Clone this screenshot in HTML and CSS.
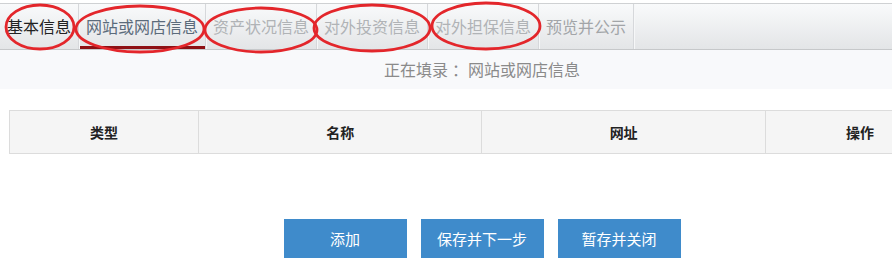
FILE: index.html
```html
<!DOCTYPE html>
<html lang="zh-CN">
<head>
  <meta charset="UTF-8" />
  <title>网站或网店信息</title>
  <link rel="stylesheet" href="styles.css">
</head>
<body>

<div class="viewport">
  <div class="page">
    <nav class="tabs">
      <a href="#" class="tab done">基本信息</a>
      <a href="#" class="tab active">网站或网店信息</a>
      <a href="#" class="tab">资产状况信息</a>
      <a href="#" class="tab">对外投资信息</a>
      <a href="#" class="tab">对外担保信息</a>
      <a href="#" class="tab preview">预览并公示</a>
    </nav>

    <div class="notice">正在填录<span class="colon">：</span>网站或网店信息</div>

    <table class="grid">
      <thead>
        <tr>
          <th class="col-type">类型</th>
          <th class="col-name">名称</th>
          <th class="col-url">网址</th>
          <th class="col-op">操作</th>
        </tr>
      </thead>
    </table>

    <div class="actions">
      <button>添加</button>
      <button>保存并下一步</button>
      <button>暂存并关闭</button>
    </div>
  </div>

  <!-- 批注圈 -->
  <svg class="marks" width="892" height="60" viewBox="0 0 892 60">
    <g fill="none" stroke="#e3262b" stroke-width="2.8">
      <ellipse cx="40" cy="27" rx="34" ry="22" />
      <ellipse cx="140" cy="29" rx="64" ry="23" />
      <ellipse cx="261" cy="30" rx="56" ry="22" />
      <ellipse cx="372" cy="28" rx="58" ry="23" />
      <ellipse cx="486" cy="26" rx="54" ry="23" />
    </g>
  </svg>
</div>

</body>
</html>
```

FILE: styles.css
```css
html, body {
  margin: 0;
  padding: 0;
  background: #ffffff;
  font-family: "Noto Sans CJK SC", "Noto Sans", sans-serif;
}

/* 页面比窗口宽，右侧被裁掉 */
.viewport {
  position: relative;
  width: 100%;
  height: 275px;
  overflow: hidden;
}

.page {
  width: 964px;
  padding-top: 3px;
}

.tabs {
  display: flex;
  height: 45px;
  border-top: 1px solid #cfd1d3;
  border-bottom: 1px solid #c6c8ca;
  background: linear-gradient(#f9fafb, #e3e5e7);
}

.tab {
  position: relative;
  padding: 0 7px;
  line-height: 45px;
  font-size: 16px;
  color: #b0b3b6;
  text-decoration: none;
  border-right: 1px solid #d6d8db;
  box-shadow: 1px 0 0 #f6f7f8;
}

.tab.done {
  color: #222;
}

.tab.active {
  color: #5b6b7b;
}

.tab.active::after {
  content: "";
  position: absolute;
  left: 1px;
  right: 0;
  bottom: 0;
  height: 3px;
  background: #8e1014;
}

.tab.preview {
  color: #a2a5a8;
}

.notice {
  height: 39px;
  line-height: 39px;
  background: #f8f9fb;
  text-align: center;
  font-size: 16px;
  color: #8a8a8a;
}

/* 冒号往中间挪一点 */
.notice .colon {
  padding-left: 4px;
}

.grid {
  width: 946px;
  margin: 21px 9px 0;
  border-collapse: collapse;
  table-layout: fixed;
}

.grid th {
  height: 42px;
  padding: 0;
  background: #f5f5f5;
  border: 1px solid #dcdcdc;
  font-size: 14px;
  font-weight: bold;
  color: #222;
}

.col-type { width: 20%; }
.col-name { width: 30%; }
.col-url { width: 30%; }
.col-op { width: 20%; }

.actions {
  display: flex;
  justify-content: center;
  gap: 14px;
  margin-top: 65px;
}

.actions button {
  width: 123px;
  height: 39px;
  border: none;
  background: #3f8bcb;
  color: #ffffff;
  font-family: inherit;
  font-size: 15px;
  cursor: pointer;
}

.marks {
  position: absolute;
  top: 0;
  left: 0;
  pointer-events: none;
}
```
